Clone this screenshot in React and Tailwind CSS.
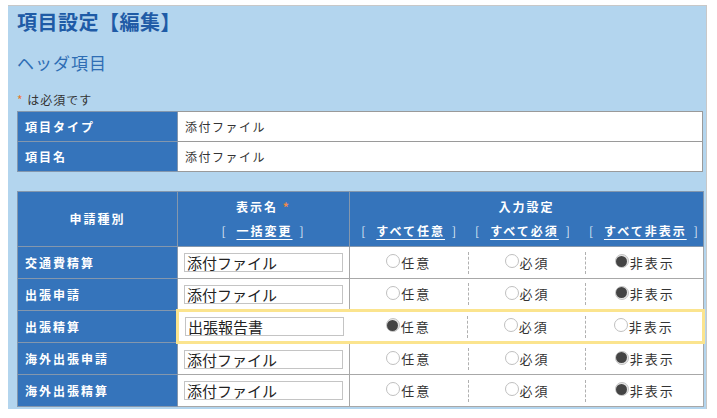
import React from "react";

const FONT = { fontFamily: '"Noto Sans CJK JP", "Noto Sans", sans-serif' };

function Radio({ checked }) {
  return checked ? (
    <span className="inline-flex h-[14px] w-[14px] items-center justify-center rounded-full border border-[#c4c4c4] bg-[#e6e6e6]">
      <span className="block h-[11px] w-[11px] rounded-full bg-[#444]" />
    </span>
  ) : (
    <span className="inline-block h-[14px] w-[14px] rounded-full border border-[#c0c0c0] bg-white" />
  );
}

function RadioCell({ label, checked, dashed }) {
  return (
    <div className={"flex h-[22px] w-[118px] items-center justify-center " + (dashed ? "border-l border-dashed border-[#b0b0b0]" : "")}>
      <span className="flex items-center">
        <span className="-mt-[3px] flex"><Radio checked={checked} /></span>
        <span className="ml-[1px] text-[13px] leading-[16px] tracking-[2px] text-[#333]">{label}</span>
      </span>
    </div>
  );
}

function BLink({ children }) {
  return (
    <span className="whitespace-nowrap">
      <span className="font-normal text-[#dde8f5]">[</span>
      <span className="ml-[9px] mr-[7px] font-bold text-white underline underline-offset-[3px]">{children}</span>
      <span className="font-normal text-[#dde8f5]">]</span>
    </span>
  );
}

const rows = [
  { name: "交通費精算", value: "添付ファイル", sel: 2 },
  { name: "出張申請", value: "添付ファイル", sel: 2 },
  { name: "出張精算", value: "出張報告書", sel: 0, hl: true },
  { name: "海外出張申請", value: "添付ファイル", sel: 2 },
  { name: "海外出張精算", value: "添付ファイル", sel: 2 },
];

export default function App() {
  return (
    <div className="bg-white pt-[5px] pl-[8px]" style={FONT}>
      <div className="h-[404px] w-[699px] overflow-hidden border-t border-r border-[#c8c8c8] bg-[#b3d5ee] pl-[9px] pt-[2px]">
        <h1 className="text-[20px] font-bold leading-[28px] tracking-[0.5px] text-[#1f5ba6]">項目設定【編集】</h1>
        <h2 className="mt-[15px] text-[17px] leading-[24px] tracking-[1px] text-[#2e6db4]">ヘッダ項目</h2>
        <p className="mt-[17px] text-[12px] leading-[16px] tracking-[1px] text-[#333]">
          <span className="text-[#e8782e]">*</span> は必須です
        </p>
        <table className="mt-[3px] w-[686px] table-fixed border-collapse border border-[#9a9a9a]">
          <colgroup>
            <col className="w-[160px]" />
            <col />
          </colgroup>
          <tbody>
            {[["項目タイプ", "添付ファイル"], ["項目名", "添付ファイル"]].map(([k, v]) => (
              <tr key={k} className="h-[30px]">
                <td className="border border-[#8497ad] bg-[#3574bb] pl-[7px] text-[12px] font-bold tracking-[2px] text-white">{k}</td>
                <td className="border border-[#9a9a9a] bg-white pl-[7px] text-[12px] tracking-[1.5px] text-[#333]">{v}</td>
              </tr>
            ))}
          </tbody>
        </table>

        <table className="mt-[19px] w-[686px] table-fixed border-collapse border border-[#9a9a9a]">
          <colgroup>
            <col className="w-[160px]" />
            <col className="w-[172px]" />
            <col className="w-[354px]" />
          </colgroup>
          <thead>
            <tr className="h-[55px]">
              <th className="border border-[#8497ad] bg-[#3574bb] text-center text-[12px] font-bold tracking-[2px] text-white">申請種別</th>
              <th className="border border-[#8497ad] bg-[#3574bb] text-center text-[12px] font-bold tracking-[2px] text-white">
                <div className="leading-[18px]">表示名 <span className="text-[#f08a4b]">*</span></div>
                <div className="mt-[6px] flex justify-center leading-[18px]">
                  <BLink>一括変更</BLink>
                </div>
              </th>
              <th className="border border-[#8497ad] bg-[#3574bb] text-center text-[12px] font-bold tracking-[2px] text-white">
                <div className="leading-[18px]">入力設定</div>
                <div className="mt-[6px] flex justify-center gap-[17px] pl-[8px] leading-[18px]">
                  <BLink>すべて任意</BLink>
                  <BLink>すべて必須</BLink>
                  <BLink>すべて非表示</BLink>
                </div>
              </th>
            </tr>
          </thead>
          <tbody>
            {rows.map((r) => (
              <tr key={r.name} className="h-[32px]">
                <td className="border border-[#8497ad] bg-[#3574bb] pl-[7px] text-[12px] font-bold tracking-[2px] text-white">{r.name}</td>
                <td className={"bg-white pl-[6px] " + (r.hl ? "border-y-[3px] border-l-[3px] border-[#fbe48e]" : "border border-[#a8a8a8]")}>
                  <div className="flex h-[19px] w-[159px] items-center border border-[#c4c4c4] bg-white pl-[2px] text-[15px] leading-[17px] text-[#222]">
                    {r.value}
                  </div>
                </td>
                <td className={"bg-white " + (r.hl ? "border-y-[3px] border-r-[3px] border-[#fbe48e]" : "border border-[#a8a8a8]")}>
                  <div className="flex">
                    <RadioCell label="任意" checked={r.sel === 0} />
                    <RadioCell label="必須" checked={r.sel === 1} dashed />
                    <RadioCell label="非表示" checked={r.sel === 2} dashed />
                  </div>
                </td>
              </tr>
            ))}
          </tbody>
        </table>
      </div>
    </div>
  );
}
